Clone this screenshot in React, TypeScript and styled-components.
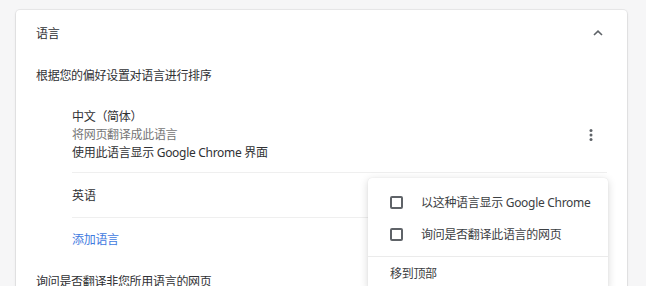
import styled, { createGlobalStyle } from 'styled-components'

const GlobalStyle = createGlobalStyle`
  html, body {
    margin: 0;
    padding: 0;
    background: #f6f6f7;
  }
  body {
    font-family: 'Noto Sans', 'Noto Sans CJK SC', sans-serif;
    font-size: 12px;
    color: #303134;
  }
`

const Page = styled.div`
  width: 646px;
  height: 286px;
  overflow: hidden;
  padding: 10px 19px 0 16px;
  box-sizing: border-box;
`

const Card = styled.section`
  position: relative;
  background: #fff;
  border-radius: 4px 4px 0 0;
  box-shadow: 0 0 0 1px rgba(0, 0, 0, 0.05), 0 1px 3px rgba(0, 0, 0, 0.1);
  padding: 0 20px;
  height: 300px;
`

const HeaderRow = styled.div`
  display: flex;
  align-items: center;
  justify-content: space-between;
  height: 46px;
`

const Title = styled.span`
  letter-spacing: -0.3px;
  color: #303134;
`

const IconBox = styled.span<{ $w: number }>`
  display: flex;
  align-items: center;
  justify-content: center;
  width: ${({ $w }) => $w}px;
  color: #5f6368;
`

const TextRow = styled.div<{ $h: number }>`
  display: flex;
  align-items: center;
  height: ${({ $h }) => $h}px;
  letter-spacing: -0.3px;
`

const LangList = styled.div`
  padding-left: 36px;
`

const LangItem = styled.div<{ $h?: number; $last?: boolean }>`
  display: flex;
  align-items: center;
  justify-content: space-between;
  box-sizing: border-box;
  min-height: ${({ $h }) => ($h ? `${$h}px` : 'auto')};
  padding: ${({ $h }) => ($h ? '0' : '14px 0 10px')};
  border-bottom: ${({ $last }) => ($last ? 'none' : '1px solid #efefef')};
`

const LangInfo = styled.div`
  display: flex;
  flex-direction: column;
  line-height: 18px;
  letter-spacing: -0.3px;
`

const LangName = styled.span`
  color: #303134;
`

const LangNote = styled.span<{ $muted?: boolean }>`
  color: ${({ $muted }) => ($muted ? '#767676' : '#303134')};
`

const AddLink = styled.span`
  color: #3f7ae0;
  letter-spacing: -0.3px;
`

const Menu = styled.div`
  position: absolute;
  left: 352px;
  top: 168px;
  width: 240px;
  background: #fff;
  border-radius: 4px;
  box-shadow: 0 2px 8px rgba(0, 0, 0, 0.16), 0 0 1px rgba(0, 0, 0, 0.12);
  padding-top: 8px;
`

const MenuItem = styled.div`
  display: flex;
  align-items: center;
  height: 32px;
  padding: 0 22px;
  gap: 18px;
  color: #3c4043;
  letter-spacing: -0.3px;
  white-space: nowrap;
`

const CheckBox = styled.span`
  width: 13px;
  height: 13px;
  box-sizing: border-box;
  border: 2px solid #5f6368;
  border-radius: 2px;
  flex-shrink: 0;
`

const MenuDivider = styled.div`
  height: 1px;
  background: #ebebeb;
  margin-top: 6px;
`

const ChevronUp = () => (
  <svg width="10" height="6" viewBox="0 0 10 6">
    <path d="M1 5 L5 1.2 L9 5" fill="none" stroke="currentColor" strokeWidth="1.6" />
  </svg>
)

const MoreVert = () => (
  <svg width="4" height="14" viewBox="0 0 4 14">
    <circle cx="2" cy="2.5" r="1.5" fill="currentColor" />
    <circle cx="2" cy="7" r="1.5" fill="currentColor" />
    <circle cx="2" cy="11.5" r="1.5" fill="currentColor" />
  </svg>
)

const App = () => {
  return (
    <>
      <GlobalStyle />
      <Page>
        <Card>
          <HeaderRow>
            <Title>语言</Title>
            <IconBox $w={18}>
              <ChevronUp />
            </IconBox>
          </HeaderRow>
          <TextRow $h={38}>根据您的偏好设置对语言进行排序</TextRow>
          <LangList>
            <LangItem>
              <LangInfo>
                <LangName>中文（简体）</LangName>
                <LangNote $muted>将网页翻译成此语言</LangNote>
                <LangNote>使用此语言显示 Google Chrome 界面</LangNote>
              </LangInfo>
              <IconBox $w={32}>
                <MoreVert />
              </IconBox>
            </LangItem>
            <LangItem $h={45}>
              <LangName>英语</LangName>
            </LangItem>
            <LangItem $h={41} $last>
              <AddLink>添加语言</AddLink>
            </LangItem>
          </LangList>
          <TextRow $h={44}>询问是否翻译非您所用语言的网页</TextRow>

          <Menu>
            <MenuItem>
              <CheckBox />
              以这种语言显示 Google Chrome
            </MenuItem>
            <MenuItem>
              <CheckBox />
              询问是否翻译此语言的网页
            </MenuItem>
            <MenuDivider />
            <MenuItem>移到顶部</MenuItem>
          </Menu>
        </Card>
      </Page>
    </>
  )
}

export default App
